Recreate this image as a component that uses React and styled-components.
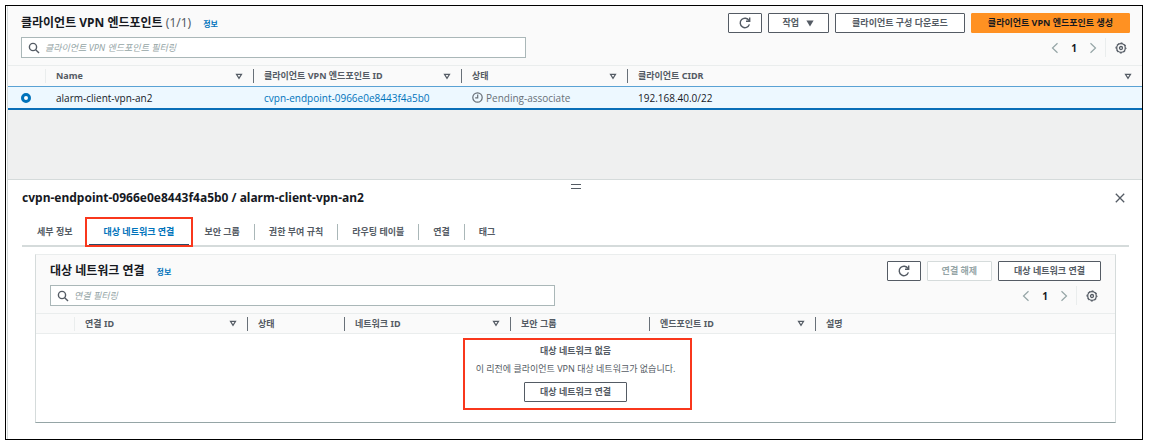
import React from "react";
import styled, { createGlobalStyle, css } from "styled-components";

const c = {
  text: "#16191f",
  muted: "#545b64",
  faint: "#95a5a6",
  link: "#0073bb",
  line: "#eaeded",
  mid: "#d5dbdb",
  panel: "#fafafa",
  field: "#aab7b8",
  orange: "#ff9122",
  mark: "#f9371c",
};

const GlobalStyle = createGlobalStyle`
  *, *::before, *::after { box-sizing: border-box; }
  body { margin: 0; background: #fff; }
  body, button, input {
    font-family: "Noto Sans", "Noto Sans CJK KR", sans-serif;
    font-size: 10px;
    line-height: 16px;
    color: ${c.text};
  }
`;

const Frame = styled.main`
  margin: 5px 6px 8px 5px;
  padding-left: 1px;
  border: 1px solid #000;
`;

const Console = styled.div`
  border-left: 1px solid ${c.mid};
`;

const ListSection = styled.section`
  background: #eff0f0;
  padding-bottom: 69px;
  border-bottom: 1px solid ${c.mid};
`;

const Toolbar = styled.header`
  background: ${c.panel};
  padding: ${(p) => (p.$inCard ? "6px 14px 7px" : "7px 12px 7px 13px")};
  border-bottom: 1px solid ${c.line};
`;

const ToolbarRow = styled.div`
  display: flex;
  align-items: center;
  justify-content: space-between;
  height: ${(p) => (p.$lower ? 21 : 20)}px;
  margin-top: ${(p) => (p.$lower ? 4 : 0)}px;
`;

const Heading = styled.h2`
  margin: 0;
  font-size: 12px;
  line-height: 18px;
  font-weight: 700;
  white-space: nowrap;
`;

const Count = styled.span`
  font-weight: 400;
  color: ${c.muted};
`;

const InfoLink = styled.a`
  margin-left: 12px;
  font-size: 8px;
  font-weight: 700;
  color: ${c.link};
  text-decoration: none;
`;

const Actions = styled.div`
  display: flex;
  gap: 6px;
`;

const Button = styled.button`
  display: inline-flex;
  align-items: center;
  justify-content: center;
  gap: 7px;
  height: 20px;
  padding: 0 ${(p) => p.$pad || 16}px;
  border: 1px solid ${c.muted};
  border-radius: 1px;
  background: #fff;
  color: ${c.muted};
  font-size: 9px;
  font-weight: 700;
  white-space: nowrap;
  cursor: pointer;

  ${(p) =>
    p.$primary &&
    css`
      background: ${c.orange};
      border-color: ${c.orange};
      color: ${c.text};
    `}

  &:disabled {
    color: ${c.faint};
    border-color: ${c.mid};
    cursor: default;
  }
`;

const SearchBox = styled.label`
  display: flex;
  align-items: center;
  gap: 5px;
  flex: 0 1 505px;
  height: 21px;
  padding: 0 6px;
  border: 1px solid ${c.field};
  background: #fff;
  color: ${c.muted};
`;

const SearchInput = styled.input`
  flex: 1;
  min-width: 0;
  padding: 0;
  border: 0;
  outline: 0;
  background: none;
  font-size: 9px;

  &::placeholder {
    color: ${c.faint};
    font-style: italic;
    opacity: 1;
  }
`;

const Pager = styled.nav`
  display: flex;
  align-items: center;
`;

const PageNumber = styled.span`
  width: 24px;
  text-align: center;
  font-size: 10px;
  font-weight: 700;
`;

const IconButton = styled.button`
  display: inline-flex;
  align-items: center;
  justify-content: center;
  padding: 0;
  border: 0;
  background: none;
  width: ${(p) => (p.$faint ? 14 : 18)}px;
  height: 19px;
  color: ${(p) => (p.$faint ? c.faint : c.muted)};
  cursor: pointer;
`;

const PagerDivider = styled.span`
  width: 1px;
  height: 19px;
  margin: 0 6px 0 5px;
  background: ${c.line};
`;

const Table = styled.table`
  width: 100%;
  table-layout: fixed;
  border-collapse: separate;
  border-spacing: 0;
`;

const Th = styled.th`
  height: 20px;
  padding: 0 10px 0 0;
  background: ${c.panel};
  border-bottom: ${(p) => (p.$line ? `1px solid ${c.line}` : "0")};
  color: ${c.muted};
  font-size: 9px;
  line-height: 14px;
  font-weight: 700;
  text-align: left;
  white-space: nowrap;
`;

const ThInner = styled.div`
  display: flex;
  align-items: center;
  justify-content: space-between;
  height: 14px;
  padding-left: 10px;
  border-left: 1px solid ${(p) => (p.$soft ? c.line : "#687078")};
`;

const Td = styled.td`
  height: 24px;
  padding: 0 0 0 ${(p) => (p.$select ? 0 : 11)}px;
  border-top: 1px solid #5aa2d4;
  border-bottom: 2px solid #0a6fb8;
  background: #edf8ff;
  font-family: "Open Sans", "Noto Sans CJK KR", sans-serif;
  font-weight: ${(p) => (p.$link ? 500 : 400)};
  white-space: nowrap;

  a {
    color: ${c.link};
    text-decoration: none;
  }
`;

const Radio = styled.input`
  appearance: none;
  display: block;
  width: 10px;
  height: 10px;
  margin: 0 0 0 13px;
  border: 3px solid ${c.link};
  border-radius: 50%;
  background: #fff;
`;

const Status = styled.span`
  display: flex;
  align-items: center;
  gap: 3px;
  color: #687078;
`;

const DetailSection = styled.section`
  padding: 0 13px 16px 14px;
`;

const Handle = styled.button`
  display: block;
  width: 10px;
  height: 5px;
  margin: 0 auto;
  padding: 0;
  border: solid ${c.muted};
  border-width: 1px 0;
  background: none;
  cursor: row-resize;
`;

const HandleRow = styled.div`
  padding-top: 4px;
`;

const DetailHeader = styled.div`
  display: flex;
  align-items: center;
  justify-content: space-between;
  height: 18px;
`;

const Tabs = styled.div`
  display: flex;
  align-items: center;
  height: 40px;
  padding-top: 11px;
  border-bottom: 2px solid ${c.mid};
`;

const Tab = styled.button`
  position: relative;
  height: 29px;
  padding: 0;
  border: 0;
  background: none;
  color: ${(p) => (p.$active ? c.link : c.muted)};
  font-size: 9px;
  font-weight: 700;
  white-space: nowrap;
  cursor: pointer;
`;

const TabLabel = styled.span`
  display: block;
  padding: 0 ${(p) => (p.$active ? 15 : 14)}px;
  border-right: 1px solid ${(p) => (p.$plain ? "transparent" : c.field)};
`;

const ActiveMark = styled.span`
  position: absolute;
  inset: 0 1px;
  border-bottom: 2px solid #2b4a66;
`;

const Callout = styled.span`
  position: absolute;
  inset: ${(p) => p.$inset};
  border: 2px solid ${c.mark};
  pointer-events: none;
`;

const Card = styled.div`
  margin: 7px 13px 0;
  border: 1px solid ${c.mid};
  border-top-color: ${c.line};
  border-bottom: 1px solid #95a5a6;
`;

const EmptyCell = styled.td`
  height: 88px;
  padding: 4px 0 0;
  vertical-align: top;
  text-align: center;
  color: ${c.muted};
  font-size: 9px;
`;

const Empty = styled.div`
  position: relative;
  display: inline-flex;
  flex-direction: column;
  align-items: center;
  padding: 5px 15px 8px;
`;

const EmptyText = styled.p`
  margin: 0 0 2px;
  font-weight: ${(p) => (p.$bold ? 700 : 400)};
`;

const EmptyAction = styled.div`
  margin-top: 3px;
  line-height: 0;
`;

const SearchIcon = () => (
  <svg width="12" height="12" viewBox="0 0 12 12" fill="none" stroke="currentColor" strokeWidth="1.4" aria-hidden="true">
    <circle cx="5" cy="5" r="3.6" />
    <path d="M7.7 7.7 11 11" />
  </svg>
);

const RefreshIcon = () => (
  <svg width="12" height="12" viewBox="0 0 12 12" fill="none" stroke="currentColor" strokeWidth="1.4" aria-hidden="true">
    <path d="M10.4 7.4A4.7 4.7 0 1 1 10 3.6" />
    <path d="M10.7 .5v3.8H7" />
  </svg>
);

const CaretIcon = () => (
  <svg width="8" height="7" viewBox="0 0 8 7" fill="currentColor" aria-hidden="true">
    <path d="M.4.5h7.2L4 6.5z" />
  </svg>
);

const SortIcon = () => (
  <svg width="8" height="7" viewBox="0 0 8 7" fill="none" stroke="currentColor" strokeWidth="1.2" aria-hidden="true">
    <path d="M1.5 1.4h5L4 5.4z" />
  </svg>
);

const ChevronIcon = ({ right }) => (
  <svg width="8" height="12" viewBox="0 0 8 12" fill="none" stroke="currentColor" strokeWidth="1.2" aria-hidden="true">
    <path d={right ? "M1.5 1.2 6.5 6l-5 4.8" : "M6.5 1.2 1.5 6l5 4.8"} />
  </svg>
);

const GearIcon = () => (
  <svg width="12" height="12" viewBox="0 0 12 12" fill="none" stroke="currentColor" aria-hidden="true">
    <circle cx="6" cy="6" r="4.3" strokeWidth="1.3" />
    <circle cx="6" cy="6" r="5.1" strokeWidth="1" strokeDasharray="2 2.005" strokeDashoffset="1" />
    <circle cx="6" cy="6" r="1.5" strokeWidth="1.3" />
  </svg>
);

const ClockIcon = () => (
  <svg width="11" height="11" viewBox="0 0 11 11" fill="none" stroke="currentColor" strokeWidth="1.2" aria-hidden="true">
    <circle cx="5.5" cy="5.5" r="4.7" />
    <path d="M5.7 2.6v3.2H3.2" />
  </svg>
);

const CloseIcon = () => (
  <svg width="10" height="10" viewBox="0 0 10 10" stroke="currentColor" strokeWidth="1.3" aria-hidden="true">
    <path d="m.8.8 8.4 8.4M9.2.8.8 9.2" />
  </svg>
);

const Search = ({ placeholder }) => (
  <SearchBox>
    <SearchIcon />
    <SearchInput type="text" placeholder={placeholder} aria-label={placeholder} />
  </SearchBox>
);

const Pagination = () => (
  <Pager>
    <IconButton $faint aria-label="이전 페이지"><ChevronIcon /></IconButton>
    <PageNumber>1</PageNumber>
    <IconButton $faint aria-label="다음 페이지"><ChevronIcon right /></IconButton>
    <PagerDivider />
    <IconButton aria-label="기본 설정"><GearIcon /></IconButton>
  </Pager>
);

const HeaderRow = ({ columns, line }) => (
  <thead>
    <tr>
      <Th $line={line} aria-label="선택" />
      {columns.map((col, i) => (
        <Th key={col.name} scope="col" $line={line}>
          <ThInner $soft={i === 0}>
            {col.name}
            {col.sort && <SortIcon />}
          </ThInner>
        </Th>
      ))}
    </tr>
  </thead>
);

const Columns = ({ widths }) => (
  <colgroup>
    {widths.map((w, i) => (
      <col key={i} style={w ? { width: w } : undefined} />
    ))}
  </colgroup>
);

const endpointColumns = [
  { name: "Name", sort: true },
  { name: "클라이언트 VPN 엔드포인트 ID", sort: true },
  { name: "상태", sort: true },
  { name: "클라이언트 CIDR", sort: true },
];

const networkColumns = [
  { name: "연결 ID", sort: true },
  { name: "상태" },
  { name: "네트워크 ID", sort: true },
  { name: "보안 그룹" },
  { name: "엔드포인트 ID", sort: true },
  { name: "설명" },
];

const tabs = ["세부 정보", "대상 네트워크 연결", "보안 그룹", "권한 부여 규칙", "라우팅 테이블", "연결", "태그"];
const activeTab = 1;

export default function App() {
  return (
    <>
      <GlobalStyle />
      <Frame>
        <Console>
          <ListSection>
            <Toolbar>
              <ToolbarRow>
                <Heading>
                  클라이언트 VPN 엔드포인트 <Count>(1/1)</Count>
                  <InfoLink href="#info">정보</InfoLink>
                </Heading>
                <Actions>
                  <Button $pad={10} aria-label="새로 고침"><RefreshIcon /></Button>
                  <Button $pad={14}>작업 <CaretIcon /></Button>
                  <Button>클라이언트 구성 다운로드</Button>
                  <Button $primary>클라이언트 VPN 엔드포인트 생성</Button>
                </Actions>
              </ToolbarRow>
              <ToolbarRow $lower>
                <Search placeholder="클라이언트 VPN 엔드포인트 필터링" />
                <Pagination />
              </ToolbarRow>
            </Toolbar>
            <Table>
              <Columns widths={[37, 208, 208, 166, null]} />
              <HeaderRow columns={endpointColumns} />
              <tbody>
                <tr>
                  <Td $select>
                    <Radio type="radio" name="endpoint" defaultChecked aria-label="alarm-client-vpn-an2" />
                  </Td>
                  <Td>alarm-client-vpn-an2</Td>
                  <Td $link><a href="#endpoint">cvpn-endpoint-0966e0e8443f4a5b0</a></Td>
                  <Td><Status><ClockIcon />Pending-associate</Status></Td>
                  <Td>192.168.40.0/22</Td>
                </tr>
              </tbody>
            </Table>
          </ListSection>

          <DetailSection>
            <HandleRow><Handle aria-label="패널 크기 조정" /></HandleRow>
            <DetailHeader>
              <Heading>cvpn-endpoint-0966e0e8443f4a5b0 / alarm-client-vpn-an2</Heading>
              <IconButton aria-label="닫기"><CloseIcon /></IconButton>
            </DetailHeader>
            <Tabs role="tablist">
              {tabs.map((name, i) => (
                <Tab key={name} role="tab" aria-selected={i === activeTab} $active={i === activeTab}>
                  <TabLabel $active={i <= activeTab} $plain={i <= activeTab || i === tabs.length - 1}>
                    {name}
                  </TabLabel>
                  {i === activeTab && <ActiveMark />}
                  {i === activeTab && <Callout $inset="0 -3px -1px" />}
                </Tab>
              ))}
            </Tabs>

            <Card>
              <Toolbar $inCard>
                <ToolbarRow>
                  <Heading>
                    대상 네트워크 연결
                    <InfoLink href="#network-info">정보</InfoLink>
                  </Heading>
                  <Actions>
                    <Button $pad={10} aria-label="새로 고침"><RefreshIcon /></Button>
                    <Button $pad={14} disabled>연결 해제</Button>
                    <Button $pad={15}>대상 네트워크 연결</Button>
                  </Actions>
                </ToolbarRow>
                <ToolbarRow $lower>
                  <Search placeholder="연결 필터링" />
                  <Pagination />
                </ToolbarRow>
              </Toolbar>
              <Table>
                <Columns widths={[38, 173, 97, 166, 139, 166, null]} />
                <HeaderRow columns={networkColumns} line />
                <tbody>
                  <tr>
                    <EmptyCell colSpan={7}>
                      <Empty>
                        <EmptyText $bold>대상 네트워크 없음</EmptyText>
                        <EmptyText>이 리전에 클라이언트 VPN 대상 네트워크가 없습니다.</EmptyText>
                        <EmptyAction><Button $pad={15}>대상 네트워크 연결</Button></EmptyAction>
                        <Callout $inset="0 -2px 0 2px" />
                      </Empty>
                    </EmptyCell>
                  </tr>
                </tbody>
              </Table>
            </Card>
          </DetailSection>
        </Console>
      </Frame>
    </>
  );
}
